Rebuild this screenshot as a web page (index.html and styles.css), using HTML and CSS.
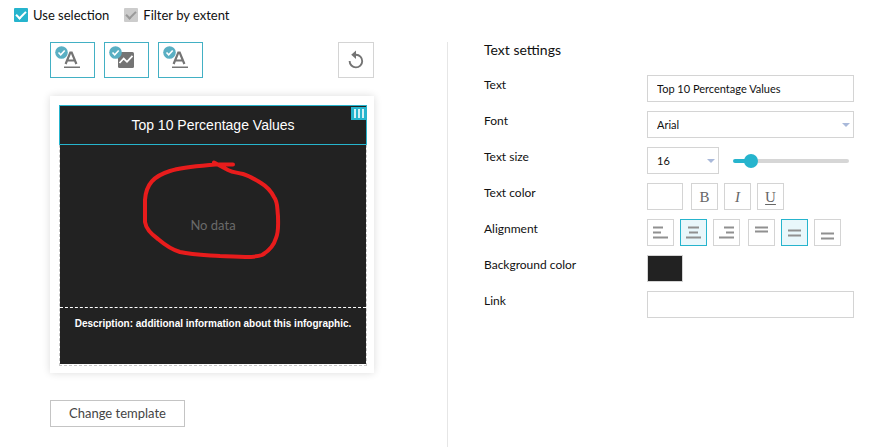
FILE: index.html
```html
<!DOCTYPE html>
<html lang="en">
<head>
<meta charset="utf-8">
<title>Infographic settings</title>
<link rel="stylesheet" href="styles.css">
</head>
<body>
<header class="options">
  <label class="option"><input class="check" type="checkbox" checked><span>Use selection</span></label>
  <label class="option"><input class="check check-muted" type="checkbox" checked><span>Filter by extent</span></label>
</header>
<main class="columns">
  <section class="preview">
    <div class="toolbar">
      <button class="tool" type="button" aria-label="Title">
        <svg width="30" height="30" viewBox="0 0 30 30"><path d="M12.600 20 17.300 8.500h1.400L23.400 20M14.200 16.500h7.600" fill="none" stroke="#747474" stroke-width="2.200"/><path d="M11 22.500h16v1.500H11z" fill="#747474"/><circle cx="8.500" cy="8.500" r="6.300" fill="#5aafc3"/><path d="m5.500 8.500 2.200 2.300 4-4.300" fill="none" stroke="#fff" stroke-width="1.600"/></svg>
      </button>
      <button class="tool" type="button" aria-label="Chart">
        <svg width="30" height="30" viewBox="0 0 30 30"><rect x="11" y="8" width="16" height="16" rx="1.500" fill="#747474"/><path d="m12.500 19 4.200-4.500 3.300 3.300 5.500-6" fill="none" stroke="#fff" stroke-width="1.800"/><circle cx="8.500" cy="8.500" r="6.300" fill="#5aafc3"/><path d="m5.500 8.500 2.200 2.300 4-4.300" fill="none" stroke="#fff" stroke-width="1.600"/></svg>
      </button>
      <button class="tool" type="button" aria-label="Description">
        <svg width="30" height="30" viewBox="0 0 30 30"><path d="M12.600 20 17.300 8.500h1.400L23.400 20M14.200 16.500h7.600" fill="none" stroke="#747474" stroke-width="2.200"/><path d="M11 22.500h16v1.500H11z" fill="#747474"/><circle cx="8.500" cy="8.500" r="6.300" fill="#5aafc3"/><path d="m5.500 8.500 2.200 2.300 4-4.300" fill="none" stroke="#fff" stroke-width="1.600"/></svg>
      </button>
      <button class="reset" type="button" aria-label="Reset">
        <svg width="18" height="20" viewBox="0 0 18 20"><path d="M9 4.800a6.300 6.300 0 1 1-6.400 6.300" fill="none" stroke="#747474" stroke-width="1.900"/><path d="M9 .5v8.600L4.200 4.800z" fill="#747474"/></svg>
      </button>
    </div>
    <div class="card">
      <div class="frame">
        <div class="title-cell">Top 10 Percentage Values
          <span class="handle"><i></i><i></i><i></i></span>
        </div>
        <div class="chart-cell">No data
          <svg class="scribble" width="140" height="102" viewBox="0 0 140 102"><path d="M93 4.500H75C58 6 42 7 30 11 14 16 6 24 5 40V62C6 69 11 74 18 79c7 6 15 11 22 13 13 3 26 3 40 4 14 0 32 3 42-1 7-4 12-10 14-17 3-7 2-14 2-22-1-8 0-14-4-19-3-6-8-11-13-14-5-3-11-7-18-9-7-2-9-1-15-4L74 2.500" fill="none" stroke="#e81c1c" stroke-width="4" stroke-linecap="round" stroke-linejoin="round"/></svg>
        </div>
        <div class="description-cell">Description: additional information about this infographic.</div>
      </div>
    </div>
    <button class="change" type="button">Change template</button>
  </section>
  <section class="settings">
    <h2 class="heading">Text settings</h2>
    <div class="row"><label class="name" for="text">Text</label><input class="field" id="text" type="text" value="Top 10 Percentage Values"></div>
    <div class="row"><label class="name" for="font">Font</label><div class="select-box"><select class="field" id="font"><option>Arial</option></select></div></div>
    <div class="row"><label class="name" for="size">Text size</label><div class="size-controls"><div class="select-box select-small"><select class="field" id="size"><option>16</option></select></div><input class="slider" type="range" min="8" max="80" value="16" aria-label="Text size"></div></div>
    <div class="row"><span class="name">Text color</span><div class="controls">
      <button class="swatch" type="button" aria-label="Text color"></button>
      <div class="group"><button class="square" type="button">B</button><button class="square italic" type="button">I</button><button class="square underline" type="button">U</button></div>
    </div></div>
    <div class="row"><span class="name">Alignment</span><div class="controls">
      <div class="group">
        <button class="square" type="button" aria-label="Left"><svg class="lines" viewBox="0 0 25 25"><path d="M5 7.500h10M5 12.500h8M5 17.500h15"/></svg></button>
        <button class="square active" type="button" aria-label="Center"><svg class="lines" viewBox="0 0 25 25"><path d="M7 7.500h11M8 12.500h9M5 17.500h15"/></svg></button>
        <button class="square" type="button" aria-label="Right"><svg class="lines" viewBox="0 0 25 25"><path d="M10 7.500h10M12 12.500h8M5 17.500h15"/></svg></button>
      </div>
      <div class="group">
        <button class="square" type="button" aria-label="Top"><svg class="lines" viewBox="0 0 25 25"><path d="M6 7.500h13M6 11.500h13"/></svg></button>
        <button class="square active" type="button" aria-label="Middle"><svg class="lines" viewBox="0 0 25 25"><path d="M6 10.500h13M6 15.500h13"/></svg></button>
        <button class="square" type="button" aria-label="Bottom"><svg class="lines" viewBox="0 0 25 25"><path d="M6 13.500h13M6 18.500h13"/></svg></button>
      </div>
    </div></div>
    <div class="row"><span class="name">Background color</span><div class="controls"><button class="swatch swatch-dark" type="button" aria-label="Background color"></button></div></div>
    <div class="row"><label class="name" for="link">Link</label><input class="field" id="link" type="text"></div>
  </section>
</main>
</body>
</html>
```

FILE: styles.css
```css
* { box-sizing: border-box; }
body {
  margin: 0;
  min-height: 100vh;
  display: flex;
  flex-direction: column;
  background: #fff;
  color: #111;
  font: 13px/20px Lato, sans-serif;
}
button, input, select { font: inherit; color: inherit; margin: 0; padding: 0; }
button { background: #fff; border: 1px solid #d4d4d4; display: flex; align-items: center; justify-content: center; }
svg { display: block; }

.options { display: flex; gap: 15px; padding: 5px 14px 17px; }
.option { display: flex; align-items: center; gap: 5px; }
.check {
  appearance: none;
  width: 14px;
  height: 14px;
  border-radius: 1px;
  background: #26b4cd;
  display: grid;
  place-items: center;
}
.check::after {
  content: "";
  width: 8px;
  height: 4px;
  border: solid #fff;
  border-width: 0 0 2px 2px;
  transform: translateY(-1px) rotate(-45deg);
}
.check-muted { background: #ccc; }
.check-muted::after { border-color: #999; }

.columns { flex: 1; display: grid; grid-template-columns: minmax(0, 448fr) minmax(0, 434fr); }
.preview { border-right: 1px solid #e6e6e6; padding: 0 73px 20px 50px; }
.toolbar { display: flex; gap: 9px; margin-bottom: 18px; }
.tool { width: 45px; height: 36px; padding: 1px 2px; border-color: #42b0c4; align-items: flex-start; justify-content: flex-start; }
.reset { width: 36px; height: 36px; margin-left: auto; }

.card { padding: 9px 7px 7px 9px; margin-bottom: 27px; background: #fff; box-shadow: 0 0 8px rgba(0, 0, 0, .14); }
.frame { border: 1px dashed #c8c8c8; border-top: 0; padding-bottom: 1px; }
.title-cell, .chart-cell { position: relative; display: flex; align-items: center; justify-content: center; background: #222; }
.title-cell {
  height: 40px;
  margin: 0 -1px;
  border: 1px solid #26b4cd;
  color: #fff;
  font: 14px/20px "Liberation Sans", sans-serif;
}
.handle {
  position: absolute;
  top: 1px;
  right: 0;
  width: 15px;
  height: 13px;
  display: flex;
  justify-content: center;
  gap: 2px;
  padding: 2px 0;
  background: #26b4cd;
}
.handle i { width: 2px; background: #d4f0f5; }
.chart-cell { height: 162px; padding-bottom: 2px; color: #6a6a6a; }
.scribble { position: absolute; left: 80px; top: 15px; overflow: visible; }
.description-cell {
  height: 57px;
  padding-top: 6px;
  border-top: 1px dashed #fff;
  background: #222;
  color: #fff;
  text-align: center;
  font: bold 10px/20px "Liberation Sans", sans-serif;
}
.change { height: 27px; padding: 0 18px 2px; border-color: #c4c4c4; color: #444; }

.settings { padding: 0 28px 0 36px; }
.heading { margin: -2px 0 15px; font-size: 14px; line-height: 20px; font-weight: 400; }
.row { display: grid; grid-template-columns: 163px minmax(0, 1fr); height: 27px; margin-bottom: 9px; font-size: 12px; }
.name { line-height: 20px; }
.field { width: 100%; height: 27px; padding: 0 9px; border: 1px solid #d4d4d4; border-radius: 0; background: #fff; appearance: none; font-size: 11px; }
.select-box { position: relative; }
.select-box::after {
  content: "";
  position: absolute;
  right: 4px;
  top: 12px;
  border: solid transparent;
  border-width: 4px 4px 0;
  border-top-color: #a9b9da;
}
.size-controls { display: flex; align-items: center; gap: 14px; padding-right: 5px; }
.select-small { width: 72px; flex: none; }
.slider { appearance: none; flex: 1; min-width: 0; height: 14px; background: none; }
.slider::-webkit-slider-runnable-track { height: 4px; border-radius: 2px; background: linear-gradient(to right, #26b4cd 15%, #d6d6d6 15%); }
.slider::-webkit-slider-thumb { appearance: none; width: 14px; height: 14px; margin-top: -5px; border-radius: 50%; background: #26b4cd; }
.controls { display: flex; gap: 8px; }
.group { display: flex; gap: 6px; }
.square { width: 27px; height: 27px; color: #666; font: 15px/20px "Liberation Serif", serif; }
.active { background: #e9f7fb; border-color: #26b4cd; }
.italic { font-style: italic; }
.underline { text-decoration: underline; text-underline-offset: 2px; }
.lines { width: 25px; height: 25px; flex: none; fill: none; stroke: #909090; stroke-width: 2px; }
.swatch { width: 36px; height: 27px; }
.swatch-dark { background: #222; }
```
